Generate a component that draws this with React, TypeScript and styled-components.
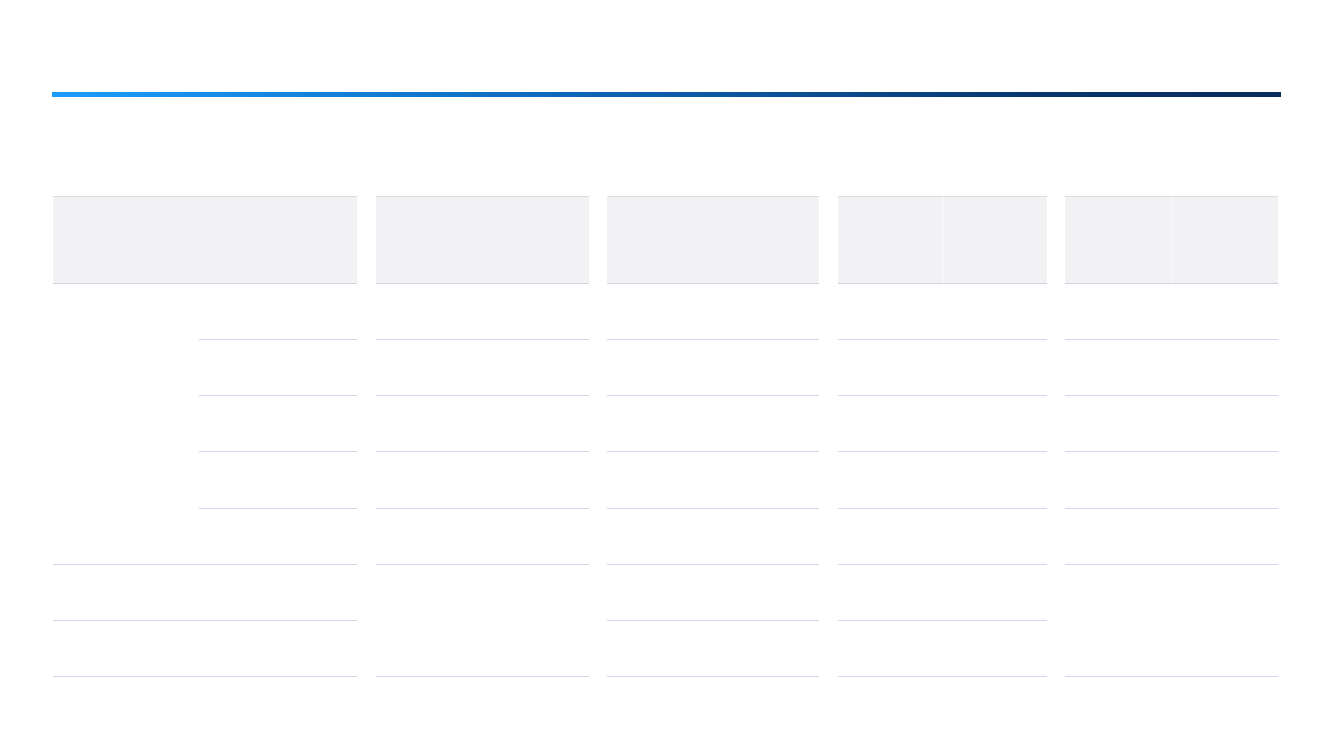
import React from "react";
import styled, { createGlobalStyle } from "styled-components";

const Global = createGlobalStyle`
  html, body { margin: 0; padding: 0; background: #ffffff; }
  body { font-family: "Liberation Sans", Arial, sans-serif; }
`;

const Page = styled.div`
  width: 1333px;
  height: 750px;
  box-sizing: border-box;
  padding: 92px 52px 0;
  display: flex;
  flex-direction: column;
`;

const Bar = styled.div`
  height: 5px;
  width: 100%;
  background: linear-gradient(90deg, #1b9dfd 0%, #0d63b3 45%, #08366f 80%, #0a2a5c 100%);
`;

const Tables = styled.div`
  margin-top: 99px;
  padding: 0 3px 0 1px;
  display: grid;
  grid-template-columns: 304px 213px 212px 209px 213px;
  justify-content: space-between;
  align-items: start;
`;

const Table = styled.table`
  width: 100%;
  border-collapse: separate;
  border-spacing: 0;
  table-layout: fixed;
`;

const HeadRow = styled.tr`
  height: 88px;
`;

const Th = styled.th<{ $sep?: boolean }>`
  padding: 0;
  background: #f2f2f4;
  border-top: 1px solid #dcdbe4;
  border-bottom: 1px solid #d3d1df;
  border-right: ${(p) => (p.$sep ? "1px solid #f7f7f9" : "none")};
`;

const Row = styled.tr`
  height: 56.14px;
`;

const Td = styled.td<{ $line?: boolean }>`
  padding: 0;
  border-bottom: ${(p) => (p.$line === false ? "none" : "1px solid #d8d4ec")};
`;

type Col = { width: number };

const Cols = ({ cols }: { cols: Col[] }) => (
  <colgroup>
    {cols.map((c, i) => (
      <col key={i} style={{ width: c.width }} />
    ))}
  </colgroup>
);

export default function App() {
  return (
    <>
      <Global />
      <Page>
        <Bar />
        <Tables>
          {/* Table 1 */}
          <Table>
            <Cols cols={[{ width: 146 }, { width: 158 }]} />
            <thead>
              <HeadRow>
                <Th colSpan={2} />
              </HeadRow>
            </thead>
            <tbody>
              <Row>
                <Td rowSpan={5} />
                <Td />
              </Row>
              <Row>
                <Td />
              </Row>
              <Row>
                <Td />
              </Row>
              <Row>
                <Td />
              </Row>
              <Row>
                <Td />
              </Row>
              <Row>
                <Td colSpan={2} />
              </Row>
              <Row>
                <Td colSpan={2} />
              </Row>
            </tbody>
          </Table>

          {/* Table 2 */}
          <Table>
            <thead>
              <HeadRow>
                <Th />
              </HeadRow>
            </thead>
            <tbody>
              {[0, 1, 2, 3, 4].map((i) => (
                <Row key={i}>
                  <Td />
                </Row>
              ))}
              <Row>
                <Td rowSpan={2} />
              </Row>
              <Row />
            </tbody>
          </Table>

          {/* Table 3 */}
          <Table>
            <thead>
              <HeadRow>
                <Th />
              </HeadRow>
            </thead>
            <tbody>
              {[0, 1, 2, 3, 4, 5, 6].map((i) => (
                <Row key={i}>
                  <Td />
                </Row>
              ))}
            </tbody>
          </Table>

          {/* Table 4 */}
          <Table>
            <Cols cols={[{ width: 106 }, { width: 103 }]} />
            <thead>
              <HeadRow>
                <Th $sep />
                <Th />
              </HeadRow>
            </thead>
            <tbody>
              {[0, 1, 2, 3, 4, 5, 6].map((i) => (
                <Row key={i}>
                  <Td />
                  <Td />
                </Row>
              ))}
            </tbody>
          </Table>

          {/* Table 5 */}
          <Table>
            <Cols cols={[{ width: 107 }, { width: 106 }]} />
            <thead>
              <HeadRow>
                <Th $sep />
                <Th />
              </HeadRow>
            </thead>
            <tbody>
              {[0, 1, 2, 3, 4].map((i) => (
                <Row key={i}>
                  <Td />
                  <Td />
                </Row>
              ))}
              <Row>
                <Td rowSpan={2} />
                <Td rowSpan={2} />
              </Row>
              <Row />
            </tbody>
          </Table>
        </Tables>
      </Page>
    </>
  );
}
